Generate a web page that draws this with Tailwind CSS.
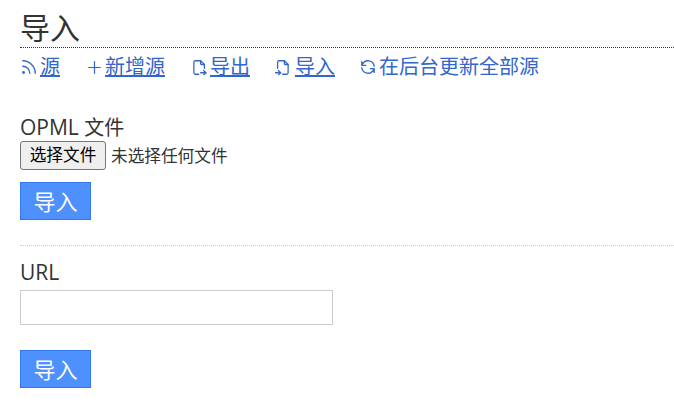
<!DOCTYPE html>
<html lang="zh-CN">
<head>
<meta charset="utf-8">
<script src="https://cdn.jsdelivr.net/npm/@tailwindcss/browser@4"></script>
</head>
<body class="bg-white text-[#333] overflow-hidden font-['Open_Sans','Noto_Sans_CJK_SC',sans-serif]">
<main class="pl-5 h-[406px] overflow-hidden">
  <header class="pt-[9px]">
    <h1 class="text-[30px] leading-[38px] font-normal border-b border-dotted border-[#333]">导入</h1>
    <nav class="flex text-[20px] leading-[28px] text-[#3366cc] mt-[5px]">
      <a class="flex items-center ml-[2px] mr-[28px]" href="#">
        <svg class="w-[14px] h-[14px] mr-[4px]" viewBox="3 3 18 18" fill="none" stroke="currentColor" stroke-width="1.7" stroke-linecap="round" stroke-linejoin="round"><path d="M4 11a9 9 0 0 1 9 9"/><path d="M4 4a16 16 0 0 1 16 16"/><circle cx="5" cy="19" r="1"/></svg>
        <span class="underline">源</span>
      </a>
      <a class="flex items-center mr-[27px]" href="#">
        <svg class="w-[13px] h-[13px] mr-[4px]" viewBox="3 3 18 18" fill="none" stroke="currentColor" stroke-width="1.7" stroke-linecap="round" stroke-linejoin="round"><path d="M12 4v16"/><path d="M4 12h16"/></svg>
        <span class="underline">新增源</span>
      </a>
      <a class="flex items-center mr-[25px]" href="#">
        <svg class="w-[15px] h-[15px] mr-[3px]" viewBox="3 2 19 20" fill="none" stroke="currentColor" stroke-width="1.7" stroke-linecap="round" stroke-linejoin="round"><path d="M14 3v4a1 1 0 0 0 1 1h4"/><path d="M11.5 21H7a2 2 0 0 1-2-2V5a2 2 0 0 1 2-2h7l5 5v5"/><path d="M14 19h7"/><path d="M18 16l3 3-3 3"/></svg>
        <span class="underline">导出</span>
      </a>
      <a class="flex items-center mr-[25px]" href="#">
        <svg class="w-[15px] h-[15px] mr-[5px]" viewBox="2 2 19 20" fill="none" stroke="currentColor" stroke-width="1.7" stroke-linecap="round" stroke-linejoin="round"><path d="M14 3v4a1 1 0 0 0 1 1h4"/><path d="M5 13V5a2 2 0 0 1 2-2h7l5 5v11a2 2 0 0 1-2 2h-5.5"/><path d="M2 19h7"/><path d="M6 16l3 3-3 3"/></svg>
        <span class="underline">导入</span>
      </a>
      <a class="flex items-center" href="#">
        <svg class="w-[14px] h-[14px] ml-px mr-[4px]" viewBox="3 3 18 18" fill="none" stroke="currentColor" stroke-width="1.7" stroke-linecap="round" stroke-linejoin="round"><path d="M20 11A8 8 0 0 0 4.9 8.5L4 5v5h5"/><path d="M4 13a8 8 0 0 0 15.1 2.5L20 19v-5h-5"/></svg>
        <span>在后台更新全部源</span>
      </a>
    </nav>
  </header>
  <form class="mt-[33px]">
    <label class="block text-[20px] leading-[28px]"><span class="text-[21px] leading-none">OPML </span>文件</label>
    <div class="flex items-center h-[29px] text-[16.67px] mt-[-1px]">
      <button type="button" class="w-[86px] h-[29px] bg-[#efefef] border border-[#767676] rounded-[3px] text-[16.67px] leading-none text-black">选择文件</button>
      <span class="ml-[5px]">未选择任何文件</span>
    </div>
    <button type="button" class="block mt-[12px] w-[71px] h-[38px] bg-[#4d90fe] border border-[#3079ed] text-white text-[22px] leading-none">导入</button>
  </form>
  <hr class="mt-[25px] border-0 border-t border-dotted border-[#ccc]">
  <form class="mt-[13px]">
    <label class="block text-[20px] leading-[28px]"><span class="text-[21px] leading-none">URL</span></label>
    <input type="url" class="block mt-[3px] w-[313px] h-[35px] bg-white border border-[#ccc]">
    <button type="button" class="block mt-[25px] w-[71px] h-[38px] bg-[#4d90fe] border border-[#3079ed] text-white text-[22px] leading-none">导入</button>
  </form>
</main>
</body>
</html>
